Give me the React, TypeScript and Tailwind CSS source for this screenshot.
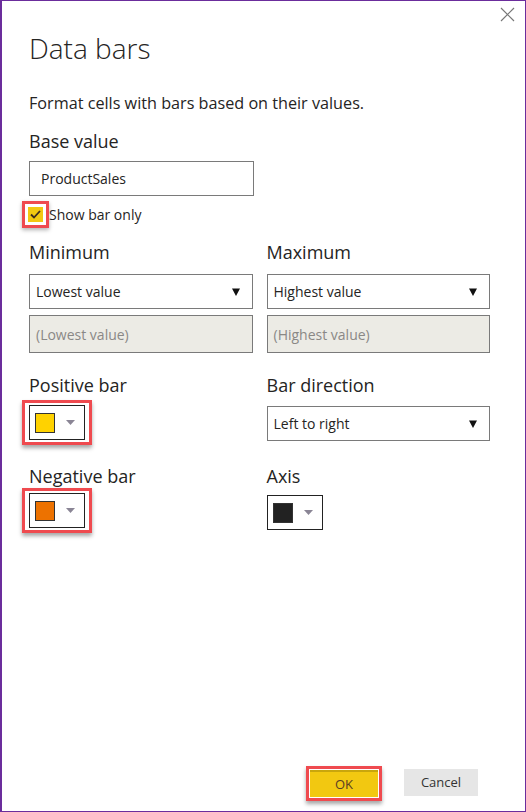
import React from 'react';

const font = { fontFamily: '"Open Sans", "Noto Sans", Arial, sans-serif' };

function Select({ value }: { value: string }) {
  return (
    <div className="flex h-[35px] items-center justify-between border border-[#7a7a7a] bg-white pl-[6px] pr-[12px] text-[14px] text-[#252423]">
      <span>{value}</span>
      <svg width="8" height="8" viewBox="0 0 8 8">
        <path d="M0 0.5h8L4 8z" fill="#111" />
      </svg>
    </div>
  );
}

function Swatch({ color, highlighted }: { color: string; highlighted?: boolean }) {
  const picker = (
    <div className="flex h-[35px] w-[56px] items-center gap-[11px] border border-[#222] bg-white pl-[5px]">
      <div className="h-[20px] w-[20px] border border-[#333]" style={{ backgroundColor: color }} />
      <svg width="9" height="5" viewBox="0 0 9 5">
        <path d="M0 0h9L4.5 5z" fill="#8a8595" />
      </svg>
    </div>
  );
  if (!highlighted) return picker;
  return (
    <div className="-ml-[7px] w-fit border-[3px] border-[#ef4a4f] px-[4px] py-[2px] shadow-[0_3px_4px_rgba(0,0,0,0.35)]">
      {picker}
    </div>
  );
}

function Label({ children }: { children: React.ReactNode }) {
  return <div className="text-[18px] leading-[24px] text-[#252423]">{children}</div>;
}

export default function App() {
  return (
    <div
      className="relative flex h-[812px] w-[526px] flex-col border border-l-2 border-[#6b2d9c] bg-white pl-[27px] pr-[35px]"
      style={font}
    >
      {/* close glyph */}
      <svg className="absolute right-[10px] top-[6px]" width="15" height="15" viewBox="0 0 15 15">
        <path d="M1 1l13 13M14 1L1 14" stroke="#777" strokeWidth="1.2" />
      </svg>

      <h1 className="mt-[28px] text-[28px] font-light leading-[38px] text-[#252423]">Data bars</h1>

      <p className="mt-[25px] text-[16.2px] leading-[22px] text-[#252423]">
        Format cells with bars based on their values.
      </p>

      <div className="mt-[15px]">
        <Label>Base value</Label>
      </div>
      <div className="mt-[8px] flex h-[35px] w-[225px] items-center border border-[#7a7a7a] pl-[11px] text-[14px] text-[#252423]">
        ProductSales
      </div>

      <div className="mt-[5px] flex items-center">
        <div className="-ml-[7px] border-[3px] border-[#ef4a4f] p-[3px] shadow-[0_2px_4px_rgba(0,0,0,0.3)]">
          <div className="flex h-[15px] w-[15px] items-center justify-center bg-[#f2c811]">
            <svg width="11" height="9" viewBox="0 0 11 9">
              <path d="M1 4.5l3 3L10 1" stroke="#3a2a20" strokeWidth="1.8" fill="none" />
            </svg>
          </div>
        </div>
        <span className="text-[14px] text-[#252423]">Show bar only</span>
      </div>

      <div className="mt-[12px] grid grid-cols-2 gap-x-[14px]">
        <div>
          <Label>Minimum</Label>
          <div className="mt-[10px]">
            <Select value="Lowest value" />
          </div>
          <div className="mt-[6px] flex h-[38px] items-center border border-[#7a7a7a] bg-[#ecebe5] pl-[6px] text-[14px] text-[#8a8886]">
            (Lowest value)
          </div>
        </div>
        <div>
          <Label>Maximum</Label>
          <div className="mt-[10px]">
            <Select value="Highest value" />
          </div>
          <div className="mt-[6px] flex h-[38px] items-center border border-[#7a7a7a] bg-[#ecebe5] pl-[6px] text-[14px] text-[#8a8886]">
            (Highest value)
          </div>
        </div>

        <div className="mt-[20px]">
          <Label>Positive bar</Label>
          <div className="mt-[3px]">
            <Swatch color="#ffd200" highlighted />
          </div>
        </div>
        <div className="mt-[20px]">
          <Label>Bar direction</Label>
          <div className="mt-[9px]">
            <Select value="Left to right" />
          </div>
        </div>

        <div className="mt-[19px]">
          <Label>Negative bar</Label>
          <div>
            <Swatch color="#ed7200" highlighted />
          </div>
        </div>
        <div className="mt-[19px]">
          <Label>Axis</Label>
          <div className="mt-[7px]">
            <Swatch color="#222222" />
          </div>
        </div>
      </div>

      <div className="mt-auto mb-[10px] flex justify-end gap-[22px] pr-[12px]">
        <div className="border-[3px] border-[#ef4a4f] p-[1px] shadow-[0_3px_4px_rgba(0,0,0,0.35)]">
          <button className="h-[27px] w-[68px] border-t-2 border-[#c9a60c] bg-[#f2c811] text-[13px] text-[#5a3d25]">
            OK
          </button>
        </div>
        <button className="mt-[3px] h-[27px] w-[74px] bg-[#e6e6e6] text-[13px] text-[#333]">Cancel</button>
      </div>
    </div>
  );
}
